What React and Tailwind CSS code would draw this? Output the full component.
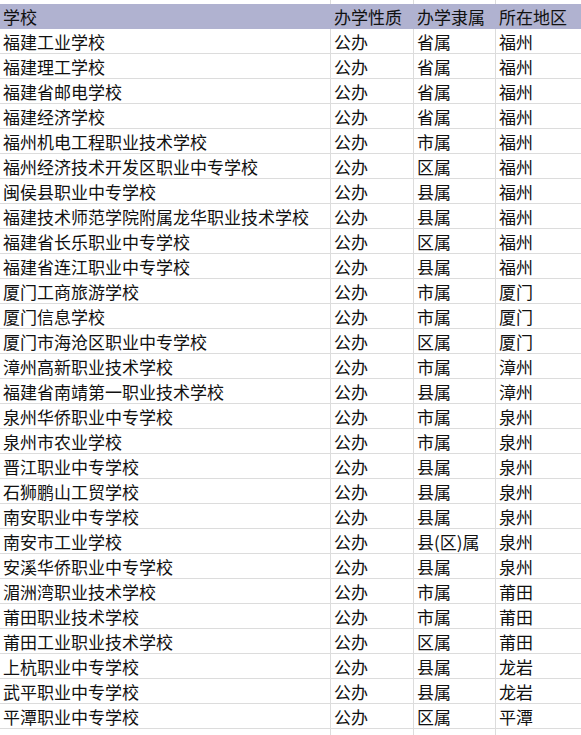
import React from 'react'

const rows = [
  ['福建工业学校', '公办', '省属', '福州'],
  ['福建理工学校', '公办', '省属', '福州'],
  ['福建省邮电学校', '公办', '省属', '福州'],
  ['福建经济学校', '公办', '省属', '福州'],
  ['福州机电工程职业技术学校', '公办', '市属', '福州'],
  ['福州经济技术开发区职业中专学校', '公办', '区属', '福州'],
  ['闽侯县职业中专学校', '公办', '县属', '福州'],
  ['福建技术师范学院附属龙华职业技术学校', '公办', '县属', '福州'],
  ['福建省长乐职业中专学校', '公办', '区属', '福州'],
  ['福建省连江职业中专学校', '公办', '县属', '福州'],
  ['厦门工商旅游学校', '公办', '市属', '厦门'],
  ['厦门信息学校', '公办', '市属', '厦门'],
  ['厦门市海沧区职业中专学校', '公办', '区属', '厦门'],
  ['漳州高新职业技术学校', '公办', '市属', '漳州'],
  ['福建省南靖第一职业技术学校', '公办', '县属', '漳州'],
  ['泉州华侨职业中专学校', '公办', '市属', '泉州'],
  ['泉州市农业学校', '公办', '市属', '泉州'],
  ['晋江职业中专学校', '公办', '县属', '泉州'],
  ['石狮鹏山工贸学校', '公办', '县属', '泉州'],
  ['南安职业中专学校', '公办', '县属', '泉州'],
  ['南安市工业学校', '公办', '县(区)属', '泉州'],
  ['安溪华侨职业中专学校', '公办', '县属', '泉州'],
  ['湄洲湾职业技术学校', '公办', '市属', '莆田'],
  ['莆田职业技术学校', '公办', '市属', '莆田'],
  ['莆田工业职业技术学校', '公办', '区属', '莆田'],
  ['上杭职业中专学校', '公办', '县属', '龙岩'],
  ['武平职业中专学校', '公办', '县属', '龙岩'],
  ['平潭职业中专学校', '公办', '区属', '平潭'],
]

const cols = 'grid grid-cols-[331px_83px_82px_85px]'

export default function App() {
  return (
    <div
      className="w-[581px] h-[735px] bg-white overflow-hidden text-[17px] text-[#111]"
      style={{ fontFamily: '"Noto Sans CJK SC", "Noto Sans", sans-serif' }}
    >
      {/* 上面半行 */}
      <div className={`${cols} h-[4px]`}>
        <div className="border-r border-[#dcdcdc]" />
        <div className="border-r border-[#dcdcdc]" />
        <div className="border-r border-[#dcdcdc]" />
        <div />
      </div>
      {/* 表头 */}
      <div className={`${cols} h-[25px] bg-[#b0b2d0] items-center leading-none`}>
        <div className="pl-[3px]">学校</div>
        <div className="pl-[3px]">办学性质</div>
        <div className="pl-[3px]">办学隶属</div>
        <div className="pl-[3px]">所在地区</div>
      </div>
      {rows.map((r, i) => (
        <div key={i} className={`${cols} h-[25px] border-b border-[#dcdcdc] leading-none`}>
          <div className="pl-[3px] flex items-center border-r border-[#dcdcdc] whitespace-nowrap">{r[0]}</div>
          <div className="pl-[3px] flex items-center border-r border-[#dcdcdc]">{r[1]}</div>
          <div className="pl-[3px] flex items-center border-r border-[#dcdcdc]">{r[2]}</div>
          <div className="pl-[3px] flex items-center">{r[3]}</div>
        </div>
      ))}
      <div className={`${cols} h-[10px]`}>
        <div className="border-r border-[#dcdcdc]" />
        <div className="border-r border-[#dcdcdc]" />
        <div className="border-r border-[#dcdcdc]" />
        <div />
      </div>
    </div>
  )
}
